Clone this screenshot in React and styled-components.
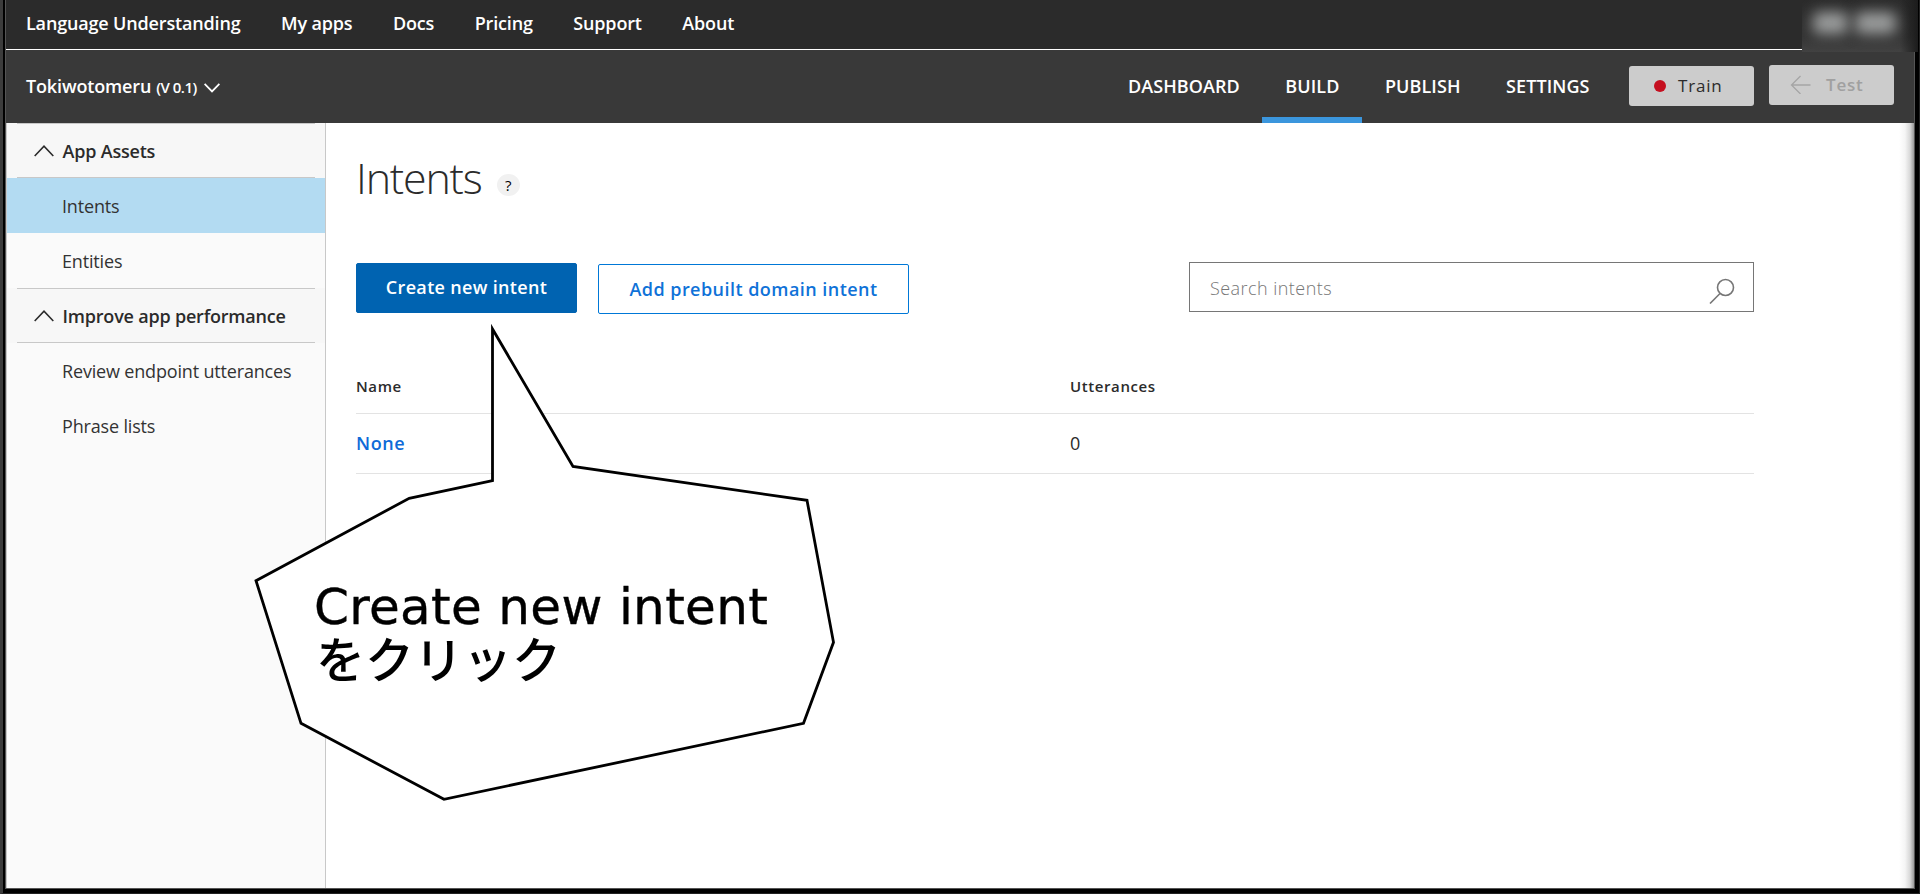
import styled, { createGlobalStyle } from "styled-components";

const GlobalStyle = createGlobalStyle`
  * {
    box-sizing: border-box;
  }

  body {
    margin: 0;
    overflow: hidden;
    font-family: "Open Sans", "Noto Sans", sans-serif;
    color: #2b2b2b;
  }
`;

const Frame = styled.div`
  position: relative;
  width: 1920px;
  height: 894px;
  padding: 0 4px 4px 2px;
  background: #000;
  border-left: 3px solid #3c3c3c;
  border-right: 1px solid #222;
  border-bottom: 1px solid #222;
`;

const Window = styled.div`
  height: 889px;
  display: flex;
  flex-direction: column;
  background: #fff;
  border: solid #555;
  border-width: 0 1px 1px 1px;
`;

const TopBar = styled.nav`
  height: 50px;
  flex-shrink: 0;
  display: flex;
  gap: 40.5px;
  padding: 11px 0 0 20px;
  background: #2b2b2b;
  border-bottom: 1px solid #fff;
`;

const TopLink = styled.a`
  color: #fff;
  font-size: 18px;
  line-height: 25px;
  font-weight: 600;
  white-space: nowrap;
  letter-spacing: -0.16px;
`;

const AppBar = styled.header`
  height: 73px;
  flex-shrink: 0;
  display: flex;
  justify-content: space-between;
  padding: 0 20px 0 20px;
  background: #393939;
  color: #fff;
`;

const AppName = styled.div`
  display: flex;
  align-items: baseline;
  padding-top: 24px;
  font-size: 18px;
  line-height: 25px;
  font-weight: 600;
  letter-spacing: -0.15px;
`;

const Version = styled.span`
  margin: 0 7px 0 5px;
  font-size: 15px;
  letter-spacing: -0.5px;
`;

const AppActions = styled.div`
  display: flex;
`;

const Tab = styled.a`
  height: 73px;
  padding: 24px 22.5px 0 23px;
  font-size: 18px;
  line-height: 25px;
  font-weight: 600;
  letter-spacing: 0.08px;
  border-bottom: 6px solid ${(props) => (props.$active ? "#3b96dd" : "transparent")};
`;

const BarButton = styled.button`
  width: 125px;
  height: 40px;
  display: flex;
  align-items: center;
  margin: ${(props) => (props.$muted ? "15px 0 0 15px" : "16px 0 0 17px")};
  padding: 0 0 2px ${(props) => (props.$muted ? "21px" : "25px")};
  gap: ${(props) => (props.$muted ? "15px" : "12px")};
  border: none;
  border-radius: 3px;
  background: #ccc;
  color: ${(props) => (props.$muted ? "#a0a0a0" : "#2b2b2b")};
  font-family: inherit;
  font-size: 17px;
  font-weight: ${(props) => (props.$muted ? 600 : 500)};
  letter-spacing: 0.8px;
`;

const Dot = styled.span`
  width: 12px;
  height: 12px;
  margin-top: 2px;
  border-radius: 50%;
  background: #c50f1f;
`;

const Body = styled.div`
  flex: 1;
  display: flex;
  background: linear-gradient(to left, #999 0, #d8d8d8 4px, #f5f5f5 9px, #fff 15px);
`;

const Sidebar = styled.aside`
  width: 320px;
  background: #fafafa;
  border: solid #c8c8c8;
  border-width: 0 1px;
`;

const Section = styled.div`
  height: 55px;
  padding: 0 10px;
  background: #f7f7f7;
`;

const SectionTitle = styled.div`
  height: 55px;
  display: flex;
  align-items: center;
  gap: 8.5px;
  padding-left: 17px;
  border: solid #c8c8c8;
  border-width: 1px 0;
  font-size: 18px;
  font-weight: 600;
  letter-spacing: -0.2px;
  white-space: nowrap;
`;

const SideItem = styled.a`
  height: 55px;
  display: flex;
  align-items: center;
  padding-left: 55px;
  background: ${(props) => (props.$active ? "#b3dbf2" : "transparent")};
  color: #333;
  font-size: 18px;
  font-weight: 400;
  letter-spacing: -0.17px;
  white-space: nowrap;
`;

const Main = styled.main`
  width: 1428px;
  padding: 25px 0 0 30px;
`;

const TitleRow = styled.div`
  display: flex;
  height: 65px;
`;

const Title = styled.h1`
  margin: 0;
  font-size: 43px;
  line-height: 60px;
  font-weight: 300;
  letter-spacing: -1.2px;
`;

const Help = styled.span`
  width: 23px;
  height: 22px;
  margin: 26px 0 0 15px;
  border-radius: 50%;
  background: #f1f1f1;
  color: #000;
  font-size: 15px;
  line-height: 22px;
  font-weight: 500;
  text-align: center;
`;

const Toolbar = styled.div`
  display: flex;
  align-items: flex-start;
  margin-top: 49px;
`;

const Button = styled.button`
  width: ${(props) => (props.$primary ? "221px" : "311px")};
  height: 50px;
  margin: ${(props) => (props.$primary ? "1px 21px 0 0" : "2px 0 0 0")};
  padding: ${(props) => (props.$primary ? "0 0 2px" : "0")};
  border: 1px solid ${(props) => (props.$primary ? "#0063b1" : "#0078d7")};
  border-radius: 2px;
  background: ${(props) => (props.$primary ? "#0063b1" : "#fff")};
  color: ${(props) => (props.$primary ? "#fff" : "#0f72d8")};
  font-family: inherit;
  font-size: 18px;
  font-weight: 600;
  letter-spacing: ${(props) => (props.$primary ? "0.32px" : "0.46px")};
  white-space: nowrap;
`;

const SearchBox = styled.div`
  width: 565px;
  height: 50px;
  display: flex;
  align-items: center;
  justify-content: space-between;
  margin-left: auto;
  padding: 2px 18px 0 20px;
  border: 1px solid #767676;
  color: #767676;
  font-size: 18px;
  font-weight: 300;
  letter-spacing: 0.45px;

  svg {
    margin-top: 5px;
  }
`;

const Table = styled.div`
  margin-top: 48px;
`;

const TableRow = styled.div`
  height: 60px;
  display: grid;
  grid-template-columns: 714px 1fr;
  align-items: center;
  padding-bottom: 2px;
  border-bottom: 1px solid #e3e3e3;
  font-size: 18px;
  font-weight: 400;
  letter-spacing: 0.6px;
`;

const HeadRow = styled(TableRow)`
  height: 52px;
  padding-bottom: 4px;
  font-size: 15px;
  font-weight: 600;
`;

const IntentLink = styled.a`
  color: #0f6bd8;
  font-weight: 600;
`;

/* account name, blurred out */
const Account = styled.div`
  position: absolute;
  top: 0;
  right: 1px;
  width: 116px;
  height: 52px;
  overflow: hidden;
  background: linear-gradient(to left, #1c1c1c 0, transparent 18px),
    linear-gradient(#2b2b2b 0, #343434 70%, #424242);
`;

const Smudge = styled.span`
  position: absolute;
  top: 12px;
  left: ${(props) => props.$left}px;
  width: ${(props) => props.$width}px;
  height: 22px;
  border-radius: 6px;
  background: #9a9c9c;
  filter: blur(7px);
`;

const Callout = styled.div`
  position: absolute;
  top: 316px;
  left: 247px;
  width: 594px;
  height: 494px;
`;

const CalloutShape = styled.svg`
  position: absolute;
  inset: 0;
`;

const CalloutText = styled.p`
  position: relative;
  margin: 0;
  padding: 265px 0 0 64px;
  color: #000;
  font-family: "DejaVu Sans", "Noto Sans CJK JP", sans-serif;
  font-size: 50px;
  line-height: 52px;
  letter-spacing: 0.33px;
  white-space: nowrap;
  -webkit-text-stroke: 0.4px #000;
`;

const Kana = styled.span`
  display: block;
  margin-top: 3px;
  padding-left: 2px;
  font-size: 49px;
  font-weight: 500;
  letter-spacing: 0;
  -webkit-text-stroke: 0;
`;

const topLinks = ["Language Understanding", "My apps", "Docs", "Pricing", "Support", "About"];
const tabs = ["DASHBOARD", "BUILD", "PUBLISH", "SETTINGS"];

const ChevronUp = () => (
  <svg width="20" height="12" viewBox="0 0 20 12" fill="none" stroke="#2b2b2b" strokeWidth="1.6">
    <path d="M0.7 11 L10 1.2 L19.3 11" />
  </svg>
);

const App = () => {
  return (
    <>
      <GlobalStyle />
      <Frame>
        <Window>
          <TopBar>
            {topLinks.map((link) => (
              <TopLink key={link}>{link}</TopLink>
            ))}
          </TopBar>
          <AppBar>
            <AppName>
              Tokiwotomeru <Version>(V 0.1)</Version>
              <svg width="16" height="10" viewBox="0 0 16 10" fill="none" stroke="#fff" strokeWidth="1.8">
                <path d="M0.6 0.8 L8 8.4 L15.4 0.8" />
              </svg>
            </AppName>
            <AppActions>
              {tabs.map((tab) => (
                <Tab key={tab} $active={tab === "BUILD"}>{tab}</Tab>
              ))}
              <BarButton>
                <Dot />
                Train
              </BarButton>
              <BarButton $muted>
                <svg width="21" height="20" viewBox="0 0 21 20" fill="none" stroke="#a5a5a5" strokeWidth="1.3">
                  <path d="M20.5 11 H1.5 M10.5 2 L1.5 11 L10.5 20" />
                </svg>
                Test
              </BarButton>
            </AppActions>
          </AppBar>
          <Body>
            <Sidebar>
              <Section>
                <SectionTitle><ChevronUp />App Assets</SectionTitle>
              </Section>
              <SideItem $active>Intents</SideItem>
              <SideItem>Entities</SideItem>
              <Section>
                <SectionTitle><ChevronUp />Improve app performance</SectionTitle>
              </Section>
              <SideItem>Review endpoint utterances</SideItem>
              <SideItem>Phrase lists</SideItem>
            </Sidebar>
            <Main>
              <TitleRow>
                <Title>Intents</Title>
                <Help>?</Help>
              </TitleRow>
              <Toolbar>
                <Button $primary>Create new intent</Button>
                <Button>Add prebuilt domain intent</Button>
                <SearchBox>
                  Search intents
                  <svg width="26" height="26" viewBox="0 0 26 26" fill="none" stroke="#767676" strokeWidth="1.6">
                    <circle cx="16.5" cy="9.5" r="8" />
                    <path d="M11 15.5 L1 25.5" />
                  </svg>
                </SearchBox>
              </Toolbar>
              <Table>
                <HeadRow>
                  <span>Name</span>
                  <span>Utterances</span>
                </HeadRow>
                <TableRow>
                  <IntentLink>None</IntentLink>
                  <span>0</span>
                </TableRow>
              </Table>
            </Main>
          </Body>
        </Window>
        <Account>
          <Smudge $left={11} $width={35} />
          <Smudge $left={53} $width={41} />
        </Account>
        <Callout>
          <CalloutShape width="594" height="494" viewBox="250 316 594 494">
            <path
              d="M492.5 329 L573 466.5 L807 500.3 L833.5 642.3 L803.5 723.3 L444 799.3 L301 723.3 L256 580.7 L409.2 498.3 L492.5 480.7 Z"
              fill="#fff"
              stroke="#000"
              strokeWidth="2.8"
            />
          </CalloutShape>
          <CalloutText>
            Create new intent
            <Kana>をクリック</Kana>
          </CalloutText>
        </Callout>
      </Frame>
    </>
  );
};

export default App;
